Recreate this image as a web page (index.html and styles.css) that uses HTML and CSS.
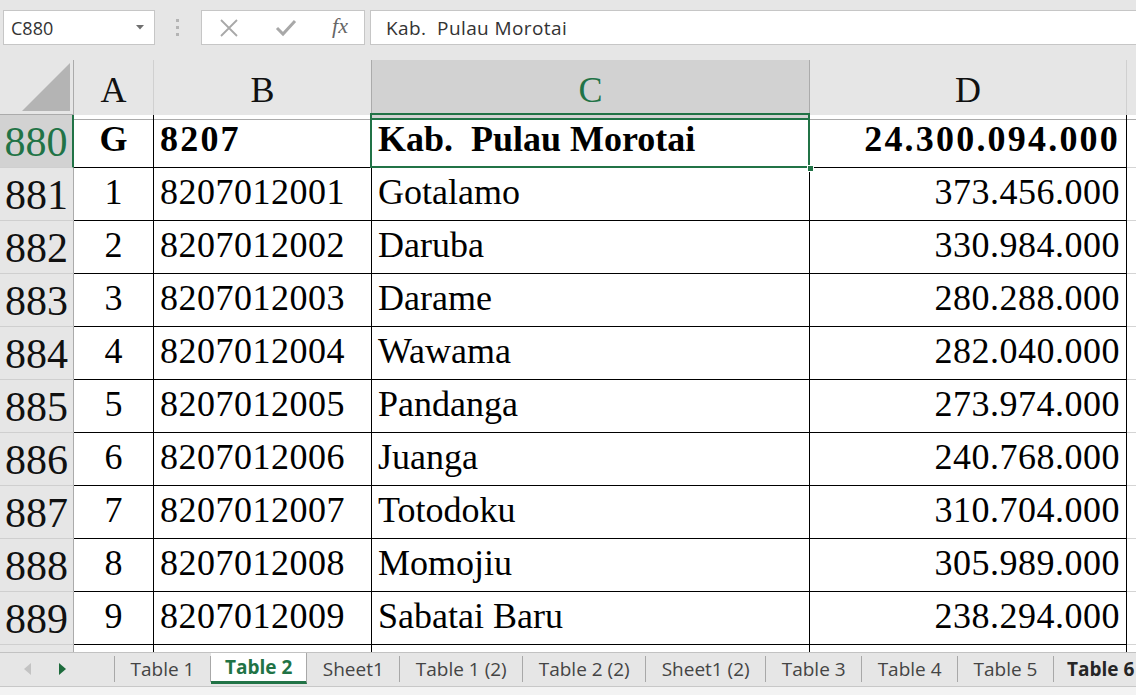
FILE: index.html
```html
<!DOCTYPE html>
<html>
<head>
<meta charset="utf-8">
<link rel="stylesheet" href="styles.css">
</head>
<body>
<div class="app">
  <div class="toolbar">
    <div class="namebox">
      <span class="namebox-text">C880</span>
      <svg class="dropdown" width="8" height="5" viewBox="0 0 8 5"><path d="M0 0H8L4 4.5Z" fill="#6f6f6f"/></svg>
    </div>
    <div class="grip">
      <svg width="4" height="20" viewBox="0 0 4 20"><rect x="0" y="1" width="3" height="3" fill="#b4b4b4"/><rect x="0" y="8" width="3" height="3" fill="#b4b4b4"/><rect x="0" y="15" width="3" height="3" fill="#b4b4b4"/></svg>
    </div>
    <div class="fbuttons">
      <svg class="ficon" width="20" height="18" viewBox="0 0 20 18"><path d="M2 1L18 17M18 1L2 17" stroke="#a8a8a8" stroke-width="1.8" fill="none"/></svg>
      <svg class="ficon" width="22" height="18" viewBox="0 0 22 18"><path d="M2 9L8 15L20 2" stroke="#a8a8a8" stroke-width="3" fill="none"/></svg>
      <span class="fx">fx</span>
    </div>
    <div class="formula"><span class="formula-text">Kab.  Pulau Morotai</span></div>
  </div>

  <div class="sheet">
    <div class="row head">
      <div class="rh corner"><svg width="48" height="48" viewBox="0 0 48 48"><path d="M48 0V48H0Z" fill="#b4b4b4"/></svg></div>
      <div class="ch">A</div>
      <div class="ch">B</div>
      <div class="ch sel">C</div>
      <div class="ch">D</div>
      <div class="ch last"></div>
    </div>

    <div class="row">
      <div class="rh selrow">880</div>
      <div class="c ctr b">G</div>
      <div class="c b bnum">8207</div>
      <div class="c b active">Kab.&nbsp; Pulau Morotai<span class="handle"></span></div>
      <div class="c rt b bnum">24.300.094.000</div>
      <div class="c e"></div>
    </div>
    <div class="row">
      <div class="rh">881</div>
      <div class="c ctr">1</div>
      <div class="c num">8207012001</div>
      <div class="c">Gotalamo</div>
      <div class="c rt num">373.456.000</div>
      <div class="c e"></div>
    </div>
    <div class="row">
      <div class="rh">882</div>
      <div class="c ctr">2</div>
      <div class="c num">8207012002</div>
      <div class="c">Daruba</div>
      <div class="c rt num">330.984.000</div>
      <div class="c e"></div>
    </div>
    <div class="row">
      <div class="rh">883</div>
      <div class="c ctr">3</div>
      <div class="c num">8207012003</div>
      <div class="c">Darame</div>
      <div class="c rt num">280.288.000</div>
      <div class="c e"></div>
    </div>
    <div class="row">
      <div class="rh">884</div>
      <div class="c ctr">4</div>
      <div class="c num">8207012004</div>
      <div class="c">Wawama</div>
      <div class="c rt num">282.040.000</div>
      <div class="c e"></div>
    </div>
    <div class="row">
      <div class="rh">885</div>
      <div class="c ctr">5</div>
      <div class="c num">8207012005</div>
      <div class="c">Pandanga</div>
      <div class="c rt num">273.974.000</div>
      <div class="c e"></div>
    </div>
    <div class="row">
      <div class="rh">886</div>
      <div class="c ctr">6</div>
      <div class="c num">8207012006</div>
      <div class="c">Juanga</div>
      <div class="c rt num">240.768.000</div>
      <div class="c e"></div>
    </div>
    <div class="row">
      <div class="rh">887</div>
      <div class="c ctr">7</div>
      <div class="c num">8207012007</div>
      <div class="c">Totodoku</div>
      <div class="c rt num">310.704.000</div>
      <div class="c e"></div>
    </div>
    <div class="row">
      <div class="rh">888</div>
      <div class="c ctr">8</div>
      <div class="c num">8207012008</div>
      <div class="c">Momojiu</div>
      <div class="c rt num">305.989.000</div>
      <div class="c e"></div>
    </div>
    <div class="row">
      <div class="rh">889</div>
      <div class="c ctr">9</div>
      <div class="c num">8207012009</div>
      <div class="c">Sabatai Baru</div>
      <div class="c rt num">238.294.000</div>
      <div class="c e"></div>
    </div>
    <div class="row">
      <div class="rh"></div>
      <div class="c"></div>
      <div class="c"></div>
      <div class="c"></div>
      <div class="c"></div>
      <div class="c e"></div>
    </div>
  </div>

  <div class="tabbar">
    <div class="nav">
      <svg width="8" height="12" viewBox="0 0 8 12"><path d="M7 0V12L0 6Z" fill="#c3c3c3"/></svg>
      <svg width="8" height="12" viewBox="0 0 8 12"><path d="M1 0V12L8 6Z" fill="#1d6b3c"/></svg>
    </div>
    <div class="tab">Table 1</div>
    <div class="tab active">Table 2</div>
    <div class="tab">Sheet1</div>
    <div class="tab">Table 1 (2)</div>
    <div class="tab">Table 2 (2)</div>
    <div class="tab">Sheet1 (2)</div>
    <div class="tab">Table 3</div>
    <div class="tab">Table 4</div>
    <div class="tab">Table 5</div>
    <div class="tab bold">Table 6</div>
  </div>
  <div class="statusbar"></div>
</div>
</body>
</html>
```

FILE: styles.css
```css
* { box-sizing: border-box; }
html, body { margin: 0; padding: 0; }
body {
  width: 1136px;
  height: 695px;
  overflow: hidden;
  background: #e6e6e6;
  font-family: "Liberation Serif", "Times New Roman", serif;
}
.app {
  display: flex;
  flex-direction: column;
  height: 695px;
}

/* toolbar */
.toolbar {
  height: 60px;
  flex: none;
  display: flex;
  align-items: flex-start;
  padding-top: 10px;
  padding-left: 3px;
  background: #e6e6e6;
  font-family: "Open Sans", "Noto Sans", sans-serif;
}
.namebox {
  width: 152px;
  height: 35px;
  background: #fff;
  border: 1px solid #c6c6c6;
  display: flex;
  align-items: center;
  justify-content: space-between;
  padding: 0 10px 0 7px;
}
.namebox-text { font-size: 18px; color: #333; }
.grip {
  width: 46px;
  height: 35px;
  display: flex;
  align-items: center;
  justify-content: center;
}
.fbuttons {
  width: 164px;
  height: 35px;
  background: #fff;
  border: 1px solid #c6c6c6;
  display: flex;
  align-items: center;
  justify-content: space-between;
  padding: 0 16px 0 17px;
}
.fx {
  font-family: "Liberation Serif", serif;
  font-style: italic;
  font-size: 22px;
  color: #666;
  line-height: 1;
  padding-bottom: 4px;
}
.formula {
  flex: 1;
  margin-left: 5px;
  height: 35px;
  background: #fff;
  border: 1px solid #c6c6c6;
  border-right: none;
  display: flex;
  align-items: center;
  padding-left: 15px;
}
.formula-text { font-size: 19px; letter-spacing: 0.4px; color: #333; white-space: pre; }

/* sheet */
.sheet {
  flex: none;
  height: 592px;
  overflow: hidden;
  background: #fff;
}
.row {
  display: grid;
  grid-template-columns: 74px 80px 218px 438px 317px 1fr;
  height: 53px;
}
.row.head { height: 55px; background: #e6e6e6; }

.rh {
  background: #e6e6e6;
  border-right: 1px solid #ababab;
  border-bottom: 1px solid #cfcfcf;
  font-size: 42px;
  line-height: 55px;
  height: 53px;
  overflow: hidden;
  text-align: center;
  color: #111;
}
.rh.corner {
  height: 55px;
  border-bottom: 1px solid #ababab;
  display: flex;
  align-items: flex-end;
  justify-content: flex-end;
  padding: 0 3px 3px 0;
}
.rh.selrow {
  background: #d2d2d2;
  color: #217346;
  border-right: 2px solid #217346;
}
.ch {
  font-size: 36px;
  line-height: 55px;
  padding-top: 3px;
  text-align: center;
  color: #111;
  border-right: 1px solid #d0d0d0;
  border-bottom: 1px solid #ababab;
}
.ch.sel {
  background: #d2d2d2;
  color: #217346;
  border-left: 1px solid #ababab;
  border-right: 1px solid #ababab;
  margin-left: -1px;
  border-bottom: 2px solid #217346;
}
.ch.last { border-right: none; }

.c {
  font-size: 36px;
  line-height: 49px;
  color: #000;
  border-right: 1px solid #000;
  border-bottom: 1px solid #000;
  padding: 0 6px;
  white-space: nowrap;
}
.c.ctr { text-align: center; }
.c.rt { text-align: right; padding-right: 6px; }
.c.num { letter-spacing: 0.5px; }
.c.b { font-weight: bold; }
.c.bnum { letter-spacing: 2.2px; }
.c.e { border-right: none; border-bottom: 1px solid #d4d4d4; }
.c.active {
  position: relative;
}
.c.active::after {
  content: "";
  position: absolute;
  left: -2px;
  top: -2px;
  right: -1px;
  bottom: -1px;
  border: 2px solid #217346;
  pointer-events: none;
}
.handle {
  position: absolute;
  right: -5px;
  bottom: -5px;
  width: 7px;
  height: 7px;
  background: #217346;
  border: 1px solid #fff;
  z-index: 2;
}

/* tabs */
.tabbar {
  flex: none;
  height: 34px;
  border-top: 1px solid #c2c2c2;
  background: #e6e6e6;
  display: flex;
  align-items: stretch;
  font-family: "Open Sans", "Noto Sans", sans-serif;
  font-size: 19px;
  color: #444;
  white-space: nowrap;
  overflow: hidden;
}
.nav {
  width: 115px;
  flex: none;
  display: flex;
  align-items: center;
  padding-left: 24px;
  gap: 26px;
  border-right: 1px solid #a8a8a8;
  margin: 3px 0 4px;
}
.tab {
  flex: none;
  padding: 0 15.5px;
  display: flex;
  align-items: center;
  border-right: 1px solid #a8a8a8;
  margin: 3px 0 4px;
  line-height: 1;
}
.tab.active {
  background: #fff;
  color: #217346;
  font-weight: bold;
  padding: 1px 14px 0;
  margin: 0 0 2px;
  border-bottom: 3px solid #217346;
}
.tab.bold { font-weight: bold; color: #262626; border-right: none; padding-left: 13px; }
.statusbar {
  flex: 1;
  background: #f3f3f3;
  border-top: 1px solid #c8c8c8;
}
```
